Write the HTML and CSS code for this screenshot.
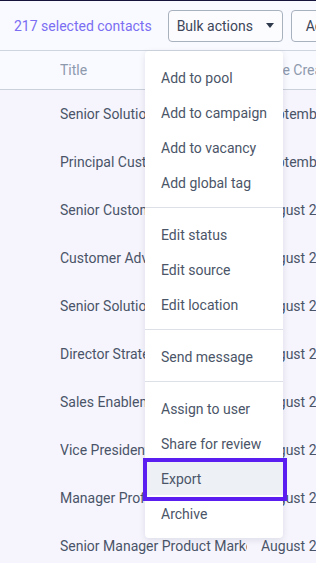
FILE: index.html
```html
<!DOCTYPE html>
<html lang="en">

<head>
    <meta charset="UTF-8">
    <meta name="viewport" content="width=device-width, initial-scale=1.0">
    <title>Contacts</title>
    <link rel="stylesheet" href="styles.css">
</head>

<body>

    <div class="toolbar">
        <span class="selected-count">217 selected contacts</span>
        <button class="btn bulk-btn">Bulk actions <span class="caret"></span></button>
        <button class="btn add-btn">Add</button>
    </div>

    <div class="table">
        <div class="row head">
            <div class="cell"></div>
            <div class="cell title">Title</div>
            <div class="cell date">Date Created</div>
        </div>
        <div class="row">
            <div class="cell"></div>
            <div class="cell title">Senior Solutions Consultant</div>
            <div class="cell date">September 12, 2023</div>
        </div>
        <div class="row">
            <div class="cell"></div>
            <div class="cell title">Principal Customer Success Manager</div>
            <div class="cell date">September 4, 2023</div>
        </div>
        <div class="row">
            <div class="cell"></div>
            <div class="cell title">Senior Customer Success Manager</div>
            <div class="cell date">August 29, 2023</div>
        </div>
        <div class="row">
            <div class="cell"></div>
            <div class="cell title">Customer Advocacy Lead</div>
            <div class="cell date">August 28, 2023</div>
        </div>
        <div class="row">
            <div class="cell"></div>
            <div class="cell title">Senior Solutions Architect</div>
            <div class="cell date">August 24, 2023</div>
        </div>
        <div class="row">
            <div class="cell"></div>
            <div class="cell title">Director Strategic Accounts</div>
            <div class="cell date">August 22, 2023</div>
        </div>
        <div class="row">
            <div class="cell"></div>
            <div class="cell title">Sales Enablement Manager</div>
            <div class="cell date">August 21, 2023</div>
        </div>
        <div class="row">
            <div class="cell"></div>
            <div class="cell title">Vice President of Sales</div>
            <div class="cell date">August 20, 2023</div>
        </div>
        <div class="row">
            <div class="cell"></div>
            <div class="cell title">Manager Professional Services</div>
            <div class="cell date">August 28, 2023</div>
        </div>
        <div class="row">
            <div class="cell"></div>
            <div class="cell title">Senior Manager Product Marketing</div>
            <div class="cell date">August 27, 2023</div>
        </div>
    </div>

    <ul class="dropdown">
        <li><a class="item">Add to pool</a></li>
        <li><a class="item">Add to campaign</a></li>
        <li><a class="item">Add to vacancy</a></li>
        <li><a class="item">Add global tag</a></li>
        <li class="divider"></li>
        <li><a class="item">Edit status</a></li>
        <li><a class="item">Edit source</a></li>
        <li><a class="item">Edit location</a></li>
        <li class="divider"></li>
        <li><a class="item">Send message</a></li>
        <li class="divider"></li>
        <li><a class="item">Assign to user</a></li>
        <li><a class="item">Share for review</a></li>
        <li><a class="item focused">Export</a></li>
        <li><a class="item">Archive</a></li>
    </ul>

</body>

</html>
```

FILE: styles.css
```css
/* Contacts list with bulk actions menu open */
body {
    margin: 0;
    background-color: #f6f5fd;
    font-family: Roboto, "Liberation Sans", sans-serif;
    font-size: 14px;
    color: #4a5468;
    overflow: hidden;
}

.toolbar {
    display: flex;
    align-items: center;
    gap: 8px;
    height: 49px;
    padding-left: 14px;
    background-color: #f9faff;
    border-top: 1px solid #16143a;
    border-bottom: 1px solid #cfd5de;
    white-space: nowrap;
}

.selected-count {
    color: #7b6ef2;
}

.btn {
    display: flex;
    align-items: center;
    flex-shrink: 0;
    height: 32px;
    padding: 0 8px;
    font-family: inherit;
    font-size: 14px;
    color: #3c4658;
    background-color: #fcfcff;
    border: 1px solid #a8b1be;
    border-radius: 4px;
    cursor: pointer;
}

.bulk-btn {
    width: 115px;
    margin-left: 8px;
}

.add-btn {
    padding: 0 14px;
}

.caret {
    margin-left: auto;
    width: 0;
    height: 0;
    border-left: 4.5px solid transparent;
    border-right: 4.5px solid transparent;
    border-top: 5px solid #2f3a4c;
}

/* Table */
.row {
    display: grid;
    grid-template-columns: 60px 187px 1fr;
    height: 48px;
    align-items: center;
    white-space: nowrap;
}

.row.head {
    height: 38px;
    background-color: #f9faff;
    border-bottom: 1px solid #cbd1da;
    color: #8d99ad;
}

.cell {
    overflow: hidden;
}

.date {
    padding-left: 14px;
}

/* Dropdown menu */
.dropdown {
    position: absolute;
    top: 51px;
    left: 145px;
    width: 138px;
    margin: 0;
    padding: 8px 0;
    list-style-type: none;
    background-color: #fff;
    border-radius: 4px;
    box-shadow: 0 2px 6px rgba(40, 50, 80, 0.12);
}

.dropdown .item {
    display: block;
    height: 31px;
    padding: 4px 0 0 16px;
    line-height: 31px;
    color: #4b5568;
    cursor: pointer;
}

.dropdown .divider {
    height: 1px;
    margin: 8px 0;
    background-color: #dde0e7;
}

.dropdown .item.focused {
    position: relative;
    background-color: #edf1f6;
}

/* focus ring drawn over the item */
.dropdown .item.focused::after {
    content: '';
    position: absolute;
    top: -2px;
    left: -2px;
    right: -4px;
    bottom: -6px;
    border: 4px solid #5a1ff0;
}
```
